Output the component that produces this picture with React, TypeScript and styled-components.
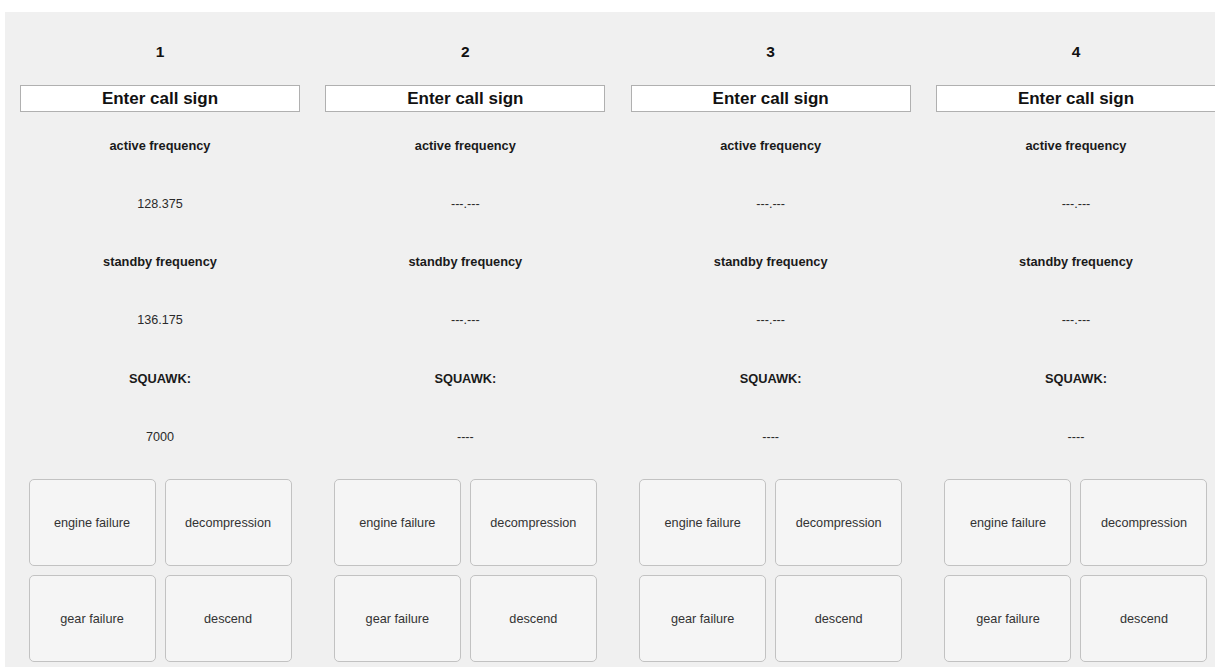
import React from 'react'
import styled, { createGlobalStyle } from 'styled-components'

type Pilot = {
  id: number
  active: string
  standby: string
  squawk: string
}

const pilots: Pilot[] = [
  { id: 1, active: '128.375', standby: '136.175', squawk: '7000' },
  { id: 2, active: '---.---', standby: '---.---', squawk: '----' },
  { id: 3, active: '---.---', standby: '---.---', squawk: '----' },
  { id: 4, active: '---.---', standby: '---.---', squawk: '----' },
]

const emergencies = ['engine failure', 'decompression', 'gear failure', 'descend']

const GlobalStyle = createGlobalStyle`
  body {
    margin: 0;
    background: #ffffff;
    font-family: 'Liberation Sans', Arial, Helvetica, sans-serif;
    overflow: hidden;
  }
`

const PilotColumn: React.FC<{ pilot: Pilot }> = ({ pilot }) => (
  <Column>
    <Title>{pilot.id}</Title>
    <CallSign placeholder="Enter call sign" />
    <Label>active frequency</Label>
    <Value>{pilot.active}</Value>
    <Label>standby frequency</Label>
    <Value>{pilot.standby}</Value>
    <Label>SQUAWK:</Label>
    <Value>{pilot.squawk}</Value>
    <ButtonGrid>
      {emergencies.map(name => (
        <EmergencyButton key={name}>{name}</EmergencyButton>
      ))}
    </ButtonGrid>
  </Column>
)

const App: React.FC = () => {
  const columns = pilots.map(pilot => <PilotColumn key={pilot.id} pilot={pilot} />)

  return (
    <>
      <GlobalStyle />
      <Page>
        <Panel>{columns}</Panel>
      </Page>
    </>
  )
}

const Page = styled.div`
  padding: 12px 0 4px 5px;
`

const Panel = styled.div`
  display: grid;
  grid-template-columns: repeat(4, 280px);
  column-gap: 25.33px;
  padding: 25px 0 5px 15px;
  background: #f0f0f0;
  height: 655px;
  box-sizing: border-box;
`

const Column = styled.div`
  display: flex;
  flex-direction: column;
  align-items: stretch;
`

const Title = styled.div`
  height: 30px;
  line-height: 30px;
  text-align: center;
  font-size: 15.5px;
  font-weight: bold;
  color: #111;
  margin-bottom: 18px;
`

const CallSign = styled.input`
  height: 27px;
  box-sizing: border-box;
  border: 1px solid #b0b0b0;
  background: #ffffff;
  text-align: center;
  font-family: 'Liberation Sans', Arial, sans-serif;
  font-size: 17px;
  font-weight: bold;
  padding: 0;
  margin: 0 0 4px;
  outline: none;

  &::placeholder {
    color: #111;
    opacity: 1;
  }
`

const Row = styled.div`
  height: 58.4px;
  display: flex;
  align-items: center;
  justify-content: center;
  color: #1a1a1a;
`

const Label = styled(Row)`
  font-size: 12.8px;
  font-weight: bold;
`

const Value = styled(Row)`
  font-size: 12.6px;
  color: #2a2a2a;
`

const ButtonGrid = styled.div`
  display: grid;
  grid-template-columns: repeat(2, 127px);
  grid-auto-rows: 87px;
  gap: 9px;
  justify-content: center;
  margin-top: 13px;
`

const EmergencyButton = styled.button`
  border: 1px solid #c2c2c2;
  border-radius: 5px;
  background: #f5f5f5;
  color: #333;
  font-family: 'Liberation Sans', Arial, sans-serif;
  font-size: 12.7px;
  padding: 0;
  cursor: pointer;
`

export default App
